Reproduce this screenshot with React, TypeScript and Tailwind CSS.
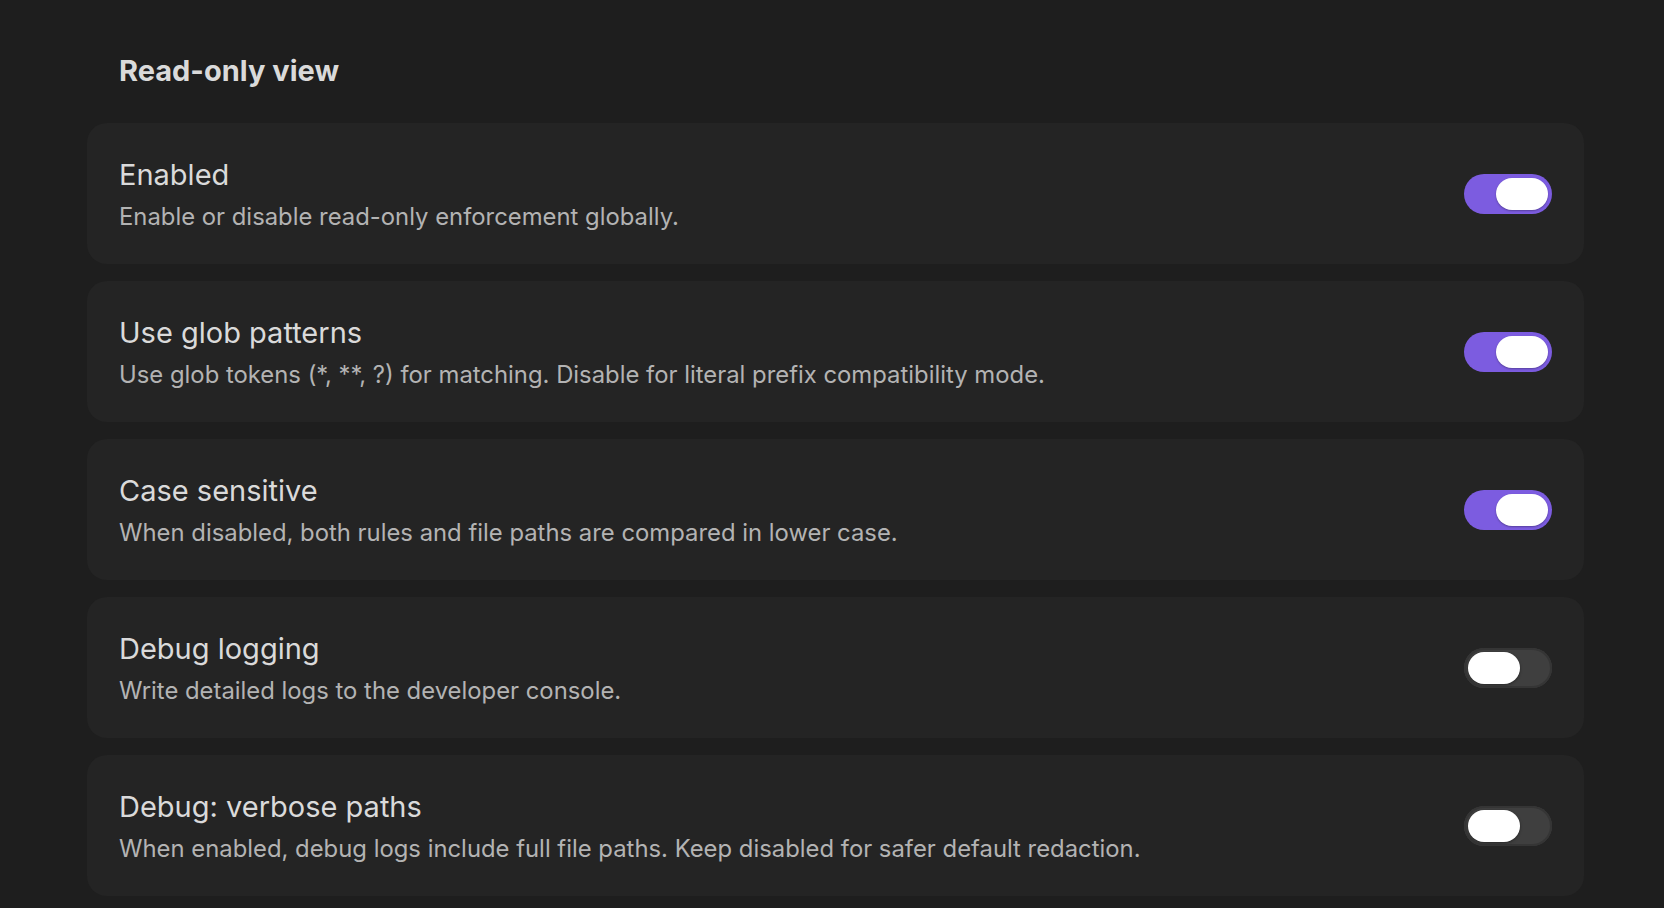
import React from "react";

type Item = { title: string; desc: string; on: boolean };

const items: Item[] = [
  { title: "Enabled", desc: "Enable or disable read-only enforcement globally.", on: true },
  {
    title: "Use glob patterns",
    desc: "Use glob tokens (*, **, ?) for matching. Disable for literal prefix compatibility mode.",
    on: true,
  },
  {
    title: "Case sensitive",
    desc: "When disabled, both rules and file paths are compared in lower case.",
    on: true,
  },
  { title: "Debug logging", desc: "Write detailed logs to the developer console.", on: false },
  {
    title: "Debug: verbose paths",
    desc: "When enabled, debug logs include full file paths. Keep disabled for safer default redaction.",
    on: false,
  },
];

function Toggle({ on }: { on: boolean }) {
  return on ? (
    <div className="flex h-[40px] w-[88px] shrink-0 items-center justify-end rounded-full bg-[#7c5ce0] p-[4px]">
      <div className="h-[32px] w-[52px] rounded-full bg-white shadow-[0_1px_2px_rgba(0,0,0,0.3)]" />
    </div>
  ) : (
    <div className="flex h-[40px] w-[88px] shrink-0 items-center justify-start rounded-full bg-[#3f3f3f] p-[4px] shadow-[inset_0_0_0_2px_#353535]">
      <div className="h-[32px] w-[52px] rounded-full bg-white shadow-[0_1px_3px_rgba(0,0,0,0.4)]" />
    </div>
  );
}

export default function App() {
  return (
    <div
      className="min-h-[908px] w-full bg-[#1e1e1e] pl-[87px] pt-[51px]"
      style={{ fontFamily: "Inter, 'Noto Sans', sans-serif" }}
    >
      <h2 className="pl-[32px] text-[29px] font-bold leading-[40px] text-[#dadada]">Read-only view</h2>
      <div className="mt-[32px] flex w-[1497px] flex-col gap-[17px]">
        {items.map((it) => (
          <div
            key={it.title}
            className="flex h-[141px] items-center justify-between rounded-[20px] bg-[#242424] pl-[32px] pr-[32px]"
          >
            <div className="flex flex-col pt-[2px]">
              <div className="text-[29px] leading-[36px] text-[#dadada]">{it.title}</div>
              <div className="mt-[8px] text-[23.85px] leading-[32px] text-[#b3b3b3]">{it.desc}</div>
            </div>
            <Toggle on={it.on} />
          </div>
        ))}
      </div>
    </div>
  );
}
